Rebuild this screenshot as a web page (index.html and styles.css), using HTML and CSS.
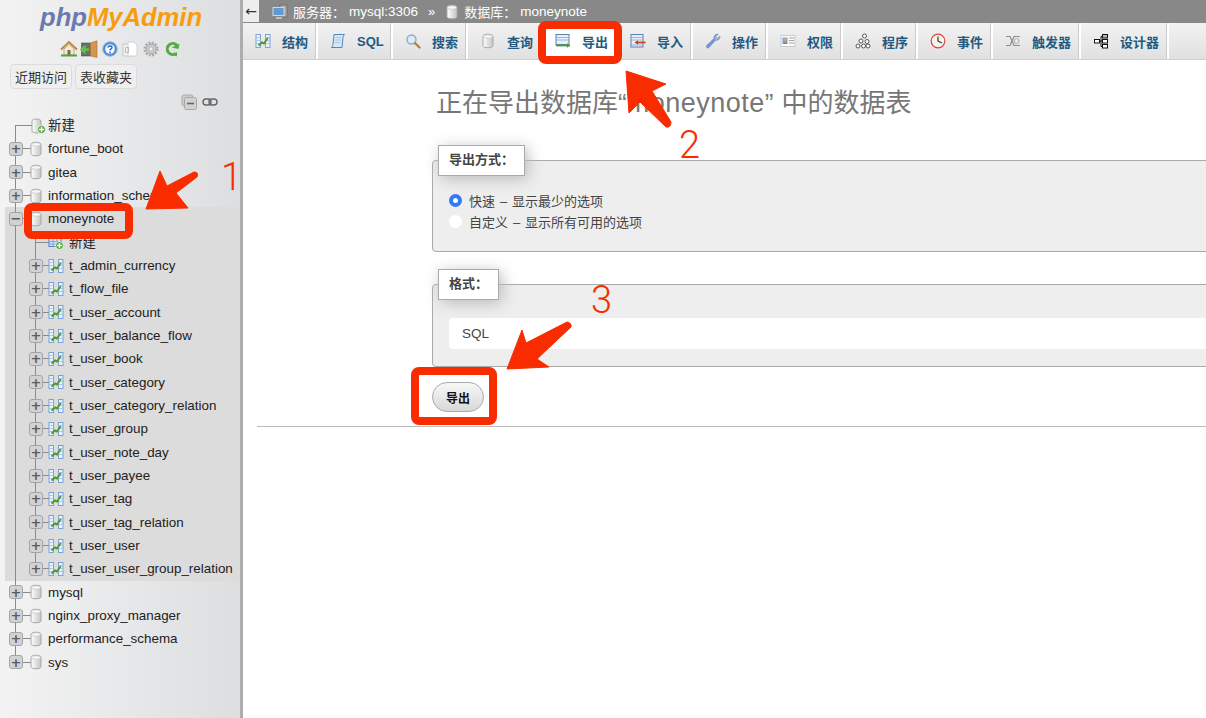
FILE: index.html
```html
<!DOCTYPE html>
<html lang="zh-CN">
<head>
    <meta charset="UTF-8">
    <title>phpMyAdmin - moneynote</title>
    <link rel="stylesheet" href="styles.css">
</head>
<body>
    <svg class="icon-defs" width="0" height="0">
        <defs>
            <linearGradient id="dbFill" x1="0" x2="1" y1="0" y2="0">
                <stop offset="0" stop-color="#ffffff"/>
                <stop offset="1" stop-color="#c4c4c4"/>
            </linearGradient>
            <symbol id="i-db" viewBox="0 0 12 16">
                <path d="M1 3.500C1 2 3 1.200 6 1.200S11 2 11 3.500V12.500C11 14 9 14.800 6 14.800S1 14 1 12.500Z" fill="url(#dbFill)" stroke="#a8a8a8"/>
                <ellipse cx="6" cy="3.500" rx="4.500" ry="1.800" fill="#f6f6f6" stroke="#c0c0c0" stroke-width=".6"/>
            </symbol>
            <symbol id="i-db-new" viewBox="0 0 16 16">
                <path d="M2 3C2 1.800 4 1 6.500 1S11 1.800 11 3V13C11 14.200 9 15 6.500 15S2 14.200 2 13Z" fill="url(#dbFill)" stroke="#a8a8a8"/>
                <circle cx="11.500" cy="11.500" r="4" fill="#55a53a" stroke="#fff" stroke-width=".8"/>
                <path d="M11.500 9v5M9 11.500h5" stroke="#fff" stroke-width="1.300"/>
            </symbol>
            <symbol id="i-tbl-new" viewBox="0 0 16 16">
                <rect x="1" y="1.500" width="12" height="11" fill="#d5e4f7" stroke="#4f80c4"/>
                <path d="M1 4.500h12M1 7.500h12M1 10h12M5 4.500v8M9 4.500v8" stroke="#6f9ad6" stroke-width=".8"/>
                <circle cx="11.500" cy="11.500" r="4" fill="#55a53a" stroke="#fff" stroke-width=".8"/>
                <path d="M11.500 9v5M9 11.500h5" stroke="#fff" stroke-width="1.300"/>
            </symbol>
            <symbol id="i-props" viewBox="0 0 16 16">
                <rect x="1" y="1.500" width="4.500" height="13" fill="#eaf2fb" stroke="#6f9bd2" stroke-width=".9"/>
                <rect x="10.500" y="1.500" width="4.500" height="13" fill="#eaf2fb" stroke="#6f9bd2" stroke-width=".9"/>
                <path d="M1 4.500h4.500M1 7.500h4.500M1 10.500h4.500M10.500 4.500h4.500M10.500 7.500h4.500M10.500 10.500h4.500" stroke="#9fbde2" stroke-width=".8"/>
                <path d="M3.500 12.500L7 9.500L9 10.500L12.800 5" fill="none" stroke="#4d9a30" stroke-width="2"/>
            </symbol>
            <symbol id="i-sql" viewBox="0 0 16 16">
                <path d="M4 1.500H14.500C13.500 2.500 13 4 12.800 6L12 14.500H1.500C2.500 13.500 3 12 3.200 10Z" fill="#d8e7f8" stroke="#4f86c6"/>
                <path d="M5.500 4.500h5.500M5.200 7h5.500M5 9.500h5.500" stroke="#9dbfe6" stroke-width=".8"/>
            </symbol>
            <symbol id="i-search" viewBox="0 0 16 16">
                <circle cx="6.500" cy="6.500" r="4.500" fill="#dcebfa" stroke="#94a9c0" stroke-width="1.400"/>
                <path d="M10 10L14.500 14.500" stroke="#b8803c" stroke-width="2.400" stroke-linecap="round"/>
            </symbol>
            <symbol id="i-export" viewBox="0 0 16 16">
                <rect x="1" y="1.500" width="13" height="10" fill="#e6effa" stroke="#5c80ad"/>
                <path d="M1 4.500h13M1 7h13" stroke="#8fa9cc" stroke-width=".8"/>
                <path d="M1 12.500h11" stroke="#4d9a30" stroke-width="1.800"/>
                <path d="M12 10.200L15.500 12.500L12 14.800Z" fill="#4d9a30"/>
            </symbol>
            <symbol id="i-import" viewBox="0 0 16 16">
                <rect x="1" y="1.500" width="12" height="12.500" fill="#e6effa" stroke="#5c80ad"/>
                <path d="M1 4.500h12M1 7h12M1 12h12" stroke="#8fa9cc" stroke-width=".8"/>
                <path d="M7 9.500h8.500" stroke="#d43a2a" stroke-width="1.800"/>
                <path d="M8 7.200L4.500 9.500L8 11.800Z" fill="#d43a2a"/>
            </symbol>
            <symbol id="i-wrench" viewBox="0 0 16 16">
                <path d="M3 15C1.500 15 .8 13.500 1.800 12.400L9 5.500C8.500 3 10.500 .8 13.200 1.200L11 3.500L12.500 5.200L15 3C15.300 5.800 13 7.800 10.500 7.200L4.200 14.300C3.800 14.800 3.500 15 3 15Z" fill="#6f9bdc" stroke="#5a7fb8" stroke-width=".6"/>
                <path d="M9.500 5L11 2.500L13 1.300L11 3.500L12.500 5.200L15 3L14 5.500L11 7.200Z" fill="#b5b5b5"/>
            </symbol>
            <symbol id="i-card" viewBox="0 0 16 16">
                <rect x="1" y="2.500" width="14" height="11" fill="#fbfbfb" stroke="#c9c9c9"/>
                <rect x="2.500" y="4.500" width="5" height="6.500" fill="#6fa6dc"/>
                <circle cx="5" cy="6.500" r="1.500" fill="#e8a55c"/>
                <path d="M3 11C3 9 7 9 7 11Z" fill="#d9682f"/>
                <path d="M9 5h5M9 7.500h5M9 10h5" stroke="#9a9a9a" stroke-width=".9"/>
            </symbol>
            <symbol id="i-gears" viewBox="0 0 16 16">
                <g fill="#fff" stroke="#555" stroke-width="1">
                    <circle cx="9.500" cy="3" r="2"/>
                    <circle cx="6" cy="8" r="2"/>
                    <circle cx="12" cy="8.500" r="2"/>
                    <circle cx="3" cy="13" r="2"/>
                    <circle cx="8.500" cy="13" r="2"/>
                    <circle cx="13" cy="13" r="2"/>
                </g>
            </symbol>
            <symbol id="i-clock" viewBox="0 0 16 16">
                <circle cx="8" cy="8" r="6.800" fill="#f7f4ea" stroke="#e0413a" stroke-width="1.200"/>
                <path d="M8 3.500V8L12 10" fill="none" stroke="#444" stroke-width="1.300"/>
            </symbol>
            <symbol id="i-trigger" viewBox="0 0 16 16">
                <path d="M1 3.500H5L9 12.500H15M1 12.500H5L9 3.500H15" fill="none" stroke="#8d8d8d" stroke-width="1.200"/>
                <circle cx="11.500" cy="8" r="2.500" fill="none" stroke="#aaa"/>
            </symbol>
            <symbol id="i-designer" viewBox="0 0 16 16">
                <g fill="#fff" stroke="#111" stroke-width="1">
                    <rect x="9.500" y="1.500" width="5" height="3.500" fill="#b9b2d6"/>
                    <rect x="9.500" y="6.500" width="5" height="3.500"/>
                    <rect x="9.500" y="11.500" width="5" height="3.500"/>
                    <rect x="1.500" y="6.500" width="5" height="3.500"/>
                </g>
                <path d="M6.500 8h3M8 3.500V13.500h1.500M8 3.500h1.500" fill="none" stroke="#111"/>
            </symbol>
            <symbol id="i-monitor" viewBox="0 0 16 16">
                <rect x="8" y="1" width="7" height="12" fill="#a9a9a9" stroke="#666" stroke-width=".7"/>
                <rect x="1" y="3.500" width="11" height="8" fill="#5e9bd6" stroke="#d6d6d6"/>
                <path d="M4 14h6" stroke="#d0d0d0" stroke-width="1.600"/>
            </symbol>
            <symbol id="i-home" viewBox="0 0 18 18">
                <path d="M4 9V15H14V9L9 4.500Z" fill="#f4ecd9" stroke="#a88a5c" stroke-width=".7"/>
                <path d="M1 9.500L9 2L17 9.500" fill="none" stroke="#c08a3e" stroke-width="2"/>
                <rect x="7.500" y="10" width="3" height="5" fill="#7a6a50"/>
                <path d="M1 15.500H17" stroke="#56a040" stroke-width="2"/>
            </symbol>
            <symbol id="i-door" viewBox="0 0 18 18">
                <rect x="1.500" y="3" width="9" height="13" fill="#67706a" stroke="#4a4f4c" stroke-width=".6"/>
                <path d="M10.500 3L17 .8V17.500L10.500 16Z" fill="#d6964e" stroke="#a8702e" stroke-width=".6"/>
                <path d="M1 9.500H5M4.800 6.500V12.500L1 9.500Z" stroke="#66c04a" stroke-width="1.600" fill="#66c04a"/>
                <path d="M5 9.500H9" stroke="#66c04a" stroke-width="2.400"/>
            </symbol>
            <symbol id="i-help" viewBox="0 0 16 16">
                <circle cx="8" cy="8" r="7.300" fill="#4f8ad6" stroke="#9fb9dc"/>
                <circle cx="8" cy="8" r="4.800" fill="#f5f8fc"/>
                <path d="M6 6.500C6 4.500 10 4.500 10 6.500C10 8 8 7.800 8 9.500" fill="none" stroke="#2f66b0" stroke-width="1.400"/>
                <circle cx="8" cy="11.300" r=".9" fill="#2f66b0"/>
            </symbol>
            <symbol id="i-docs" viewBox="0 0 16 16">
                <rect x="1" y="3" width="9" height="12" fill="#f2f2f2" stroke="#c8c8c8"/>
                <path d="M6 1H12L15 4V15H6Z" fill="#fff" stroke="#d2d2d2"/>
                <path d="M3.500 6.500h3v5h-3Z" fill="none" stroke="#bbb"/>
            </symbol>
            <symbol id="i-gear" viewBox="0 0 16 16">
                <circle cx="8" cy="8" r="5" fill="#d0d0d0" stroke="#9c9c9c" stroke-width="1"/>
                <circle cx="8" cy="8" r="6.500" fill="none" stroke="#a8a8a8" stroke-width="2" stroke-dasharray="2 1.400"/>
                <circle cx="8" cy="8" r="2.200" fill="#f1f1f1" stroke="#999" stroke-width=".7"/>
            </symbol>
            <symbol id="i-reload" viewBox="0 0 16 16">
                <path d="M13 4.500A5.500 5.500 0 1 0 12 12.500" fill="none" stroke="#57ab46" stroke-width="3"/>
                <path d="M8 7.500H15V2Z" fill="#57ab46" transform="rotate(12 12 5)"/>
                <path d="M9 13.800L13 11V15.500Z" fill="#57ab46"/>
            </symbol>
            <symbol id="i-collapse" viewBox="0 0 16 16">
                <rect x="1" y="1" width="11" height="11" rx="2" fill="#ccc" stroke="#aaa"/>
                <rect x="3.500" y="3.500" width="12" height="12" rx="2" fill="#d2d2d2" stroke="#a6a6a6"/>
                <path d="M6 9.500h7" stroke="#666" stroke-width="1.600"/>
            </symbol>
            <symbol id="i-link" viewBox="0 0 16 16">
                <rect x="1" y="5" width="8" height="6" rx="3" fill="none" stroke="#666" stroke-width="1.400"/>
                <rect x="7" y="5" width="8" height="6" rx="3" fill="none" stroke="#666" stroke-width="1.400"/>
            </symbol>
        </defs>
    </svg>

    <aside class="sidebar">
        <div class="logo"><span class="logo-php">php</span><span class="logo-my">MyAdmin</span></div>
        <div class="quick-icons">
            <svg class="qi"><use href="#i-home"/></svg>
            <svg class="qi qi-door"><use href="#i-door"/></svg>
            <svg class="qi qi-sm"><use href="#i-help"/></svg>
            <svg class="qi qi-sm"><use href="#i-docs"/></svg>
            <svg class="qi qi-sm qi-far"><use href="#i-gear"/></svg>
            <svg class="qi qi-sm qi-far"><use href="#i-reload"/></svg>
        </div>
        <div class="recent-tabs">
            <button class="recent-btn">近期访问</button>
            <button class="recent-btn">表收藏夹</button>
        </div>
        <div class="tree-tools">
            <svg class="tool-icon"><use href="#i-collapse"/></svg>
            <svg class="tool-icon"><use href="#i-link"/></svg>
        </div>

        <ul class="tree">
            <li class="row row-first"><span class="stub"></span><svg class="db-icon-new"><use href="#i-db-new"/></svg><span class="label label-cjk">新建</span></li>
            <li class="row"><span class="toggle">+</span><svg class="db-icon"><use href="#i-db"/></svg><span class="label">fortune_boot</span></li>
            <li class="row"><span class="toggle">+</span><svg class="db-icon"><use href="#i-db"/></svg><span class="label">gitea</span></li>
            <li class="row"><span class="toggle">+</span><svg class="db-icon"><use href="#i-db"/></svg><span class="label">information_schema</span></li>
            <li class="group">
                <div class="row"><span class="toggle">−</span><svg class="db-icon"><use href="#i-db"/></svg><span class="label">moneynote</span></div>
                <ul class="subtree">
                    <li class="sub-row sub-first"><span class="stub"></span><svg class="tbl-icon"><use href="#i-tbl-new"/></svg><span class="label label-cjk">新建</span></li>
                    <li class="sub-row"><span class="toggle">+</span><svg class="tbl-icon"><use href="#i-props"/></svg><span class="label">t_admin_currency</span></li>
                    <li class="sub-row"><span class="toggle">+</span><svg class="tbl-icon"><use href="#i-props"/></svg><span class="label">t_flow_file</span></li>
                    <li class="sub-row"><span class="toggle">+</span><svg class="tbl-icon"><use href="#i-props"/></svg><span class="label">t_user_account</span></li>
                    <li class="sub-row"><span class="toggle">+</span><svg class="tbl-icon"><use href="#i-props"/></svg><span class="label">t_user_balance_flow</span></li>
                    <li class="sub-row"><span class="toggle">+</span><svg class="tbl-icon"><use href="#i-props"/></svg><span class="label">t_user_book</span></li>
                    <li class="sub-row"><span class="toggle">+</span><svg class="tbl-icon"><use href="#i-props"/></svg><span class="label">t_user_category</span></li>
                    <li class="sub-row"><span class="toggle">+</span><svg class="tbl-icon"><use href="#i-props"/></svg><span class="label">t_user_category_relation</span></li>
                    <li class="sub-row"><span class="toggle">+</span><svg class="tbl-icon"><use href="#i-props"/></svg><span class="label">t_user_group</span></li>
                    <li class="sub-row"><span class="toggle">+</span><svg class="tbl-icon"><use href="#i-props"/></svg><span class="label">t_user_note_day</span></li>
                    <li class="sub-row"><span class="toggle">+</span><svg class="tbl-icon"><use href="#i-props"/></svg><span class="label">t_user_payee</span></li>
                    <li class="sub-row"><span class="toggle">+</span><svg class="tbl-icon"><use href="#i-props"/></svg><span class="label">t_user_tag</span></li>
                    <li class="sub-row"><span class="toggle">+</span><svg class="tbl-icon"><use href="#i-props"/></svg><span class="label">t_user_tag_relation</span></li>
                    <li class="sub-row"><span class="toggle">+</span><svg class="tbl-icon"><use href="#i-props"/></svg><span class="label">t_user_user</span></li>
                    <li class="sub-row"><span class="toggle">+</span><svg class="tbl-icon"><use href="#i-props"/></svg><span class="label">t_user_user_group_relation</span></li>
                </ul>
            </li>
            <li class="row"><span class="toggle">+</span><svg class="db-icon"><use href="#i-db"/></svg><span class="label">mysql</span></li>
            <li class="row"><span class="toggle">+</span><svg class="db-icon"><use href="#i-db"/></svg><span class="label">nginx_proxy_manager</span></li>
            <li class="row"><span class="toggle">+</span><svg class="db-icon"><use href="#i-db"/></svg><span class="label">performance_schema</span></li>
            <li class="row row-last"><span class="toggle">+</span><svg class="db-icon"><use href="#i-db"/></svg><span class="label">sys</span></li>
        </ul>
    </aside>

    <main class="main">
        <div class="crumbs">
            <span class="back">←</span>
            <svg class="crumb-icon"><use href="#i-monitor"/></svg>
            <span class="crumb-key">服务器：</span>
            <span class="crumb-val">mysql:3306</span>
            <span class="crumb-sep">»</span>
            <svg class="crumb-db"><use href="#i-db"/></svg>
            <span class="crumb-key">数据库：</span>
            <span class="crumb-val">moneynote</span>
        </div>

        <nav class="tabs">
            <a class="tab"><svg class="tab-icon"><use href="#i-props"/></svg>结构</a>
            <a class="tab"><svg class="tab-icon"><use href="#i-sql"/></svg>SQL</a>
            <a class="tab"><svg class="tab-icon"><use href="#i-search"/></svg>搜索</a>
            <a class="tab"><svg class="tab-icon"><use href="#i-db"/></svg>查询</a>
            <a class="tab tab-active"><svg class="tab-icon"><use href="#i-export"/></svg>导出</a>
            <a class="tab"><svg class="tab-icon"><use href="#i-import"/></svg>导入</a>
            <a class="tab"><svg class="tab-icon"><use href="#i-wrench"/></svg>操作</a>
            <a class="tab"><svg class="tab-icon"><use href="#i-card"/></svg>权限</a>
            <a class="tab"><svg class="tab-icon"><use href="#i-gears"/></svg>程序</a>
            <a class="tab"><svg class="tab-icon"><use href="#i-clock"/></svg>事件</a>
            <a class="tab"><svg class="tab-icon"><use href="#i-trigger"/></svg>触发器</a>
            <a class="tab"><svg class="tab-icon"><use href="#i-designer"/></svg>设计器</a>
        </nav>

        <div class="page">
            <div class="export-form">
                <h2 class="page-title">正在导出数据库“<span class="db-name">moneynote</span><span class="close-quote">”</span>中的数据表</h2>

                <fieldset class="box box-method">
                    <legend>导出方式：</legend>
                    <label class="radio-line"><input type="radio" name="method" checked>快速 – 显示最少的选项</label>
                    <label class="radio-line"><input type="radio" name="method">自定义 – 显示所有可用的选项</label>
                </fieldset>

                <fieldset class="box box-format">
                    <legend>格式：</legend>
                    <div class="format-select">SQL</div>
                </fieldset>

                <button class="go-btn">导出</button>
            </div>
            <hr class="page-rule">
        </div>
    </main>

    <!-- Annotations drawn on top of the screenshot -->
    <svg class="marks" viewBox="0 0 1206 718">
        <g fill="none" stroke="#f92c00" stroke-width="8">
            <rect x="28" y="207" width="101" height="28" rx="4"/>
            <rect x="542" y="25" width="76" height="35" rx="4"/>
            <rect x="415" y="371" width="78" height="50" rx="4"/>
        </g>
        <g fill="#f92c00" stroke="#f92c00" stroke-width="1" stroke-linejoin="round">
            <path d="M146 209L160 171L167 186L194 172Q199 172 197 177L176 193L188 208Z"/>
            <path d="M626 71L666 84L652 91L671 122Q671 128 666 127L640 102L629 113Z"/>
            <path d="M507 369L522 330L526 343L567 322Q572 323 571 327L537 359L549 367Z"/>
        </g>
    </svg>
    <span class="mark-num mark-1">1</span>
    <span class="mark-num mark-2">2</span>
    <span class="mark-num mark-3">3</span>
</body>
</html>
```

FILE: styles.css
```css
* {
    box-sizing: border-box;
}

body {
    margin: 0;
    height: 718px;
    display: flex;
    overflow: hidden;
    background: #fff;
    color: #444;
    font-family: "Liberation Sans", "Noto Sans CJK SC", sans-serif;
    font-size: 13px;
}

.icon-defs {
    position: absolute;
}

/* Sidebar */
.sidebar {
    width: 243px;
    flex: none;
    height: 718px;
    overflow: hidden;
    background: linear-gradient(to right, #f3f3f3, #dcdee0);
    background-size: 240px 100%;
    background-repeat: no-repeat;
    background-color: #adadad;
    color: #222;
}

.logo {
    width: 240px;
    padding-left: 40px;
    height: 37px;
    font-size: 25.6px;
    line-height: 35px;
    font-weight: bold;
    font-style: italic;
}

.logo-php {
    color: #6c78af;
}

.logo-my {
    color: #f89c0e;
}

.quick-icons {
    display: flex;
    align-items: center;
    gap: 4px;
    height: 24px;
    padding-left: 60px;
}

.qi {
    width: 18px;
    height: 18px;
}

.qi-door {
    margin-left: -2px;
}

.qi-sm {
    width: 16px;
    height: 16px;
}

.qi-far {
    margin-left: 1px;
}

.recent-tabs {
    display: flex;
    gap: 3px;
    padding: 3px 0 0 10px;
}

.recent-btn {
    width: 62px;
    height: 25px;
    padding: 0;
    border: 1px solid #dcdcdc;
    border-radius: 4px;
    background: #efefef;
    color: #333;
    font-family: inherit;
    font-size: 13px;
}

.tree-tools {
    display: flex;
    align-items: center;
    gap: 5px;
    height: 25px;
    padding-left: 181px;
}

.tool-icon {
    width: 16px;
    height: 16px;
}

.tree,
.subtree {
    list-style: none;
    margin: 0;
    padding: 0;
}

.row,
.sub-row {
    height: 23.33px;
    display: flex;
    align-items: center;
    font-size: 13.4px;
    white-space: nowrap;
}

.row {
    padding-left: 9px;
    background:
        linear-gradient(#8a8a8a, #8a8a8a) 15px 0 / 1px 100% no-repeat,
        linear-gradient(#8a8a8a, #8a8a8a) 22px 50% / 9px 1px no-repeat;
}

.row-first {
    background: linear-gradient(#8a8a8a, #8a8a8a) 15px 11.5px / 1px 100% no-repeat;
}

.row-last {
    background-size: 1px 50%, 9px 1px;
}

.group {
    background:
        linear-gradient(#8a8a8a, #8a8a8a) 15px 0 / 1px 100% no-repeat,
        linear-gradient(#dcdcdc, #dcdcdc) 5px 0 / 235px 100% no-repeat;
}

.group > .row {
    background: linear-gradient(#8a8a8a, #8a8a8a) 22px 50% / 9px 1px no-repeat;
}

.toggle {
    width: 14px;
    height: 14px;
    flex: none;
    display: flex;
    align-items: center;
    justify-content: center;
    border: 1px solid #a4a4a4;
    border-radius: 3px;
    background: #d2d2d2;
    color: #5c5c5c;
    font-family: "DejaVu Sans", sans-serif;
    font-size: 13px;
    font-weight: bold;
    line-height: 1;
}

.toggle + svg {
    margin-left: 7px;
}

.stub {
    width: 22px;
    height: 1px;
    flex: none;
    margin-left: 6px;
    margin-right: -6px;
    background: #8a8a8a;
}

.db-icon {
    width: 12px;
    height: 16px;
    flex: none;
}

.db-icon-new {
    width: 16px;
    height: 16px;
    flex: none;
    margin-left: -1px;
}

.row .label {
    margin-left: 6px;
}

.row-first .label {
    margin-left: 2px;
}

.label-cjk {
    padding-bottom: 3px;
}

.subtree {
    background: linear-gradient(#8a8a8a, #8a8a8a) 35px 0 / 1px calc(100% - 11px) no-repeat;
}

.sub-row {
    padding-left: 29px;
    background: linear-gradient(#8a8a8a, #8a8a8a) 43px 50% / 6px 1px no-repeat;
}

.sub-first {
    background: none;
}

.sub-row .toggle + svg {
    margin-left: 5px;
}

.sub-first .stub {
    width: 14px;
    margin-right: 0;
}

.tbl-icon {
    width: 16px;
    height: 16px;
    flex: none;
    margin-left: -1px;
}

.sub-row .label {
    margin-left: 5px;
}

/* Main area */
.main {
    flex: 1;
    min-width: 0;
    height: 718px;
    overflow: hidden;
    background: #fff;
}

.crumbs {
    height: 23px;
    display: flex;
    align-items: center;
    background: #888;
    color: #fff;
    font-size: 13px;
    white-space: nowrap;
}

.back {
    width: 16px;
    height: 22px;
    align-self: flex-start;
    margin-right: 13px;
    background: #eee;
    color: #333;
    font-family: "DejaVu Sans", sans-serif;
    font-size: 14px;
    line-height: 22px;
    text-align: center;
}

.crumb-icon {
    width: 16px;
    height: 16px;
    margin-right: 5px;
}

.crumb-db {
    width: 12px;
    height: 16px;
    margin-right: 6px;
}

.crumb-key {
    width: 56px;
}

.crumb-val {
    font-size: 13.5px;
}

.crumb-sep {
    margin: 0 11px 0 10px;
}

.tabs {
    display: flex;
    height: 37px;
    background: linear-gradient(#f2f2f2, #e0e0e0);
    border-bottom: 1px solid #d0d0d0;
}

.tab {
    width: 75px;
    display: flex;
    align-items: center;
    gap: 11px;
    padding-left: 12px;
    border-right: 2px solid #fff;
    box-shadow: inset -1px 0 0 #ccc;
    color: #235a81;
    font-size: 13px;
    font-weight: bold;
    white-space: nowrap;
}

.tab:nth-child(n+11) {
    width: 88px;
}

.tab-active {
    background: #fff;
    border-right-color: transparent;
    box-shadow: none;
}

.tab-icon {
    width: 16px;
    height: 16px;
    flex: none;
}

.page {
    padding-left: 14px;
}

.export-form {
    width: 1000px;
    padding-left: 175px;
}

.page-title {
    margin: 0;
    height: 85px;
    padding: 24px 0 0 4px;
    color: #777;
    font-size: 26px;
    font-weight: normal;
    line-height: 38px;
    white-space: nowrap;
}

.db-name {
    font-size: 27px;
    letter-spacing: .5px;
}

.close-quote {
    margin-right: 8px;
}

.box {
    margin: 0;
    padding: 14px 16px 19px;
    border: 1px solid #aaa;
    border-radius: 4px;
    background: #eee;
}

.box legend {
    margin-left: -11px;
    padding: 0 10px;
    height: 31px;
    border: 1px solid #aaa;
    background: #fff;
    box-shadow: 3px 3px 15px #bbb;
    color: #444;
    font-size: 13px;
    font-weight: bold;
    line-height: 27px;
}

.box-format {
    margin-top: 17px;
    padding-top: 18px;
    padding-bottom: 17px;
}

.radio-line {
    height: 21px;
    display: flex;
    align-items: center;
    color: #444;
    font-size: 13px;
    word-spacing: 1.3px;
}

.radio-line input {
    appearance: none;
    width: 13px;
    height: 13px;
    margin: 0 7px 0 0;
    border-radius: 50%;
    background: #fff;
}

.radio-line input:checked {
    background: #fff;
    border: 4px solid #2f7bf6;
}

.format-select {
    height: 31px;
    padding-left: 13px;
    border-radius: 4px;
    background: #fff;
    color: #444;
    font-size: 13.5px;
    line-height: 31px;
}

.go-btn {
    display: block;
    width: 52px;
    height: 30px;
    margin-top: 15px;
    padding: 0;
    border: 1px solid #aaa;
    border-radius: 15px;
    background: linear-gradient(#f8f8f8, #d8d8d8);
    color: #111;
    font-family: inherit;
    font-size: 12px;
    font-weight: bold;
}

.page-rule {
    margin: 14px 0 0;
    height: 1px;
    border: 0;
    background: #bbb;
}

/* Annotations */
.marks {
    position: absolute;
    left: 0;
    top: 0;
    width: 1206px;
    height: 718px;
    pointer-events: none;
}

.mark-num {
    position: absolute;
    color: #f92c00;
    font-family: Roboto, "Liberation Sans", sans-serif;
    font-size: 38px;
    font-weight: 300;
    line-height: 38px;
}

.mark-1 {
    left: 221px;
    top: 158px;
}

.mark-2 {
    left: 679px;
    top: 126px;
}

.mark-3 {
    left: 591px;
    top: 281px;
}
```
